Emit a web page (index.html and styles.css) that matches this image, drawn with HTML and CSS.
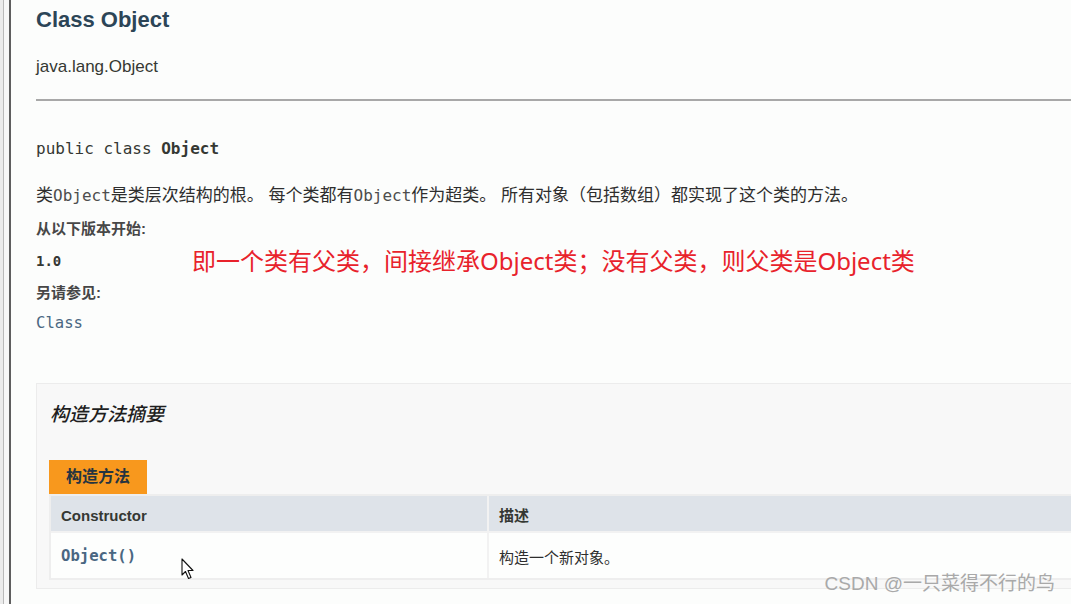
FILE: index.html
```html
<!DOCTYPE html>
<html lang="zh-CN">
<head>
    <meta charset="UTF-8">
    <meta name="viewport" content="width=device-width, initial-scale=1.0">
    <title>Object (Java Platform SE)</title>
    <link rel="stylesheet" href="styles.css">
</head>
<body>
    <div class="frame">
        <div class="gutter"></div>
        <main class="page">
            <!-- Class header -->
            <h1 class="title">Class Object</h1>
            <div class="pkg">java.lang.Object</div>
            <hr class="rule">

            <!-- Class description -->
            <pre class="signature">public class <b>Object</b></pre>
            <p class="desc">类<code>Object</code>是类层次结构的根。 每个类都有<code>Object</code>作为超类。 所有对象（包括数组）都实现了这个类的方法。</p>
            <dl class="notes">
                <dt>从以下版本开始:</dt>
                <dd class="since">
                    <span class="since-value">1.0</span>
                    <span class="remark">即一个类有父类，间接继承Object类；没有父类，则父类是Object类</span>
                </dd>
                <dt>另请参见:</dt>
                <dd><a class="ref">Class</a></dd>
            </dl>

            <!-- Constructor summary -->
            <section class="summary">
                <h3 class="summary-title">构造方法摘要</h3>
                <div class="tab">构造方法</div>
                <div class="table">
                    <div class="th">Constructor</div>
                    <div class="th">描述</div>
                    <div class="td"><code class="member">Object()</code></div>
                    <div class="td">构造一个新对象。</div>
                </div>
            </section>
        </main>
    </div>

    <svg class="cursor" width="14" height="22" viewBox="0 0 14 22">
        <path d="M1 1 L1 17 L4.5 13.5 L7.5 20.5 L10 19.5 L7 12.5 L12 12.5 Z" fill="#fff" stroke="#111" stroke-width="1.1" stroke-linejoin="round"/>
    </svg>
    <div class="watermark">CSDN @一只菜得不行的鸟</div>
</body>
</html>
```

FILE: styles.css
```css
/* General Styles */
body {
    margin: 0;
    padding: 0;
    background: #fcfdfc;
    color: #353535;
    font-family: 'Liberation Sans', Arial, 'Noto Sans CJK SC', sans-serif;
    overflow: hidden;
}

code, pre {
    font-family: 'DejaVu Sans Mono', 'Liberation Mono', monospace;
}

.frame {
    display: flex;
    min-height: 100vh;
}

.gutter {
    width: 9px;
    flex-shrink: 0;
    background: linear-gradient(to right, #ebebeb 0 3px, #b9b9b9 3px 4px, #f7f7f7 4px 9px);
    border-right: 2px solid #5e5e5e;
}

.page {
    flex: 1;
    min-width: 0;
    padding-left: 25px;
}

/* Header */
.title {
    margin: 7px 0 0;
    font-size: 22px;
    line-height: 26px;
    font-weight: bold;
    color: #2c4557;
}

.pkg {
    margin-top: 24px;
    font-size: 17px;
    line-height: 20px;
    color: #353833;
}

.rule {
    margin: 22px 0 0;
    height: 0;
    border: none;
    border-top: 2px solid #a8a8a8;
}

/* Description */
.signature {
    margin: 38px 0 0;
    font-size: 16px;
    line-height: 20px;
    color: #353833;
}

.desc {
    margin: 25px 0 0;
    font-size: 17px;
    line-height: 24px;
    color: #2e2e2e;
}

.desc code {
    font-size: 16px;
    color: #4d4d4d;
}

.notes {
    margin: 11px 0 0;
}

.notes dt {
    font-size: 15px;
    line-height: 20px;
    font-weight: bold;
    color: #474747;
}

.notes dd {
    margin: 12px 0 12px;
    height: 20px;
    display: flex;
    align-items: center;
}

.notes dd:last-child {
    margin-top: 10px;
}

.since-value {
    font-family: 'DejaVu Sans Mono', monospace;
    font-size: 14px;
    font-weight: bold;
    color: #353833;
    width: 156px;
}

.remark {
    font-family: 'Noto Sans', 'Noto Sans CJK SC', sans-serif;
    font-size: 24px;
    line-height: 20px;
    color: #e8222b;
    white-space: nowrap;
}

.ref {
    font-family: 'DejaVu Sans Mono', monospace;
    font-size: 15.6px;
    color: #4a6782;
}

/* Summary */
.summary {
    margin: 50px -12px 0 0;
    padding: 19px 0 8px 12px;
    background: #f8f8f8;
    border: 1px solid #ececec;
}

.summary-title {
    margin: 0 0 0 1px;
    font-size: 19px;
    line-height: 24px;
    font-style: italic;
    font-weight: 500;
    color: #1e1e1e;
}

.tab {
    display: inline-block;
    margin-top: 33px;
    height: 34px;
    padding: 0 17px;
    line-height: 34px;
    font-size: 16px;
    font-weight: bold;
    color: #253441;
    background: #f8981d;
    vertical-align: top;
}

.table {
    display: grid;
    grid-template-columns: 436px 1fr;
    gap: 2px;
    background: #f2f2f2;
    border: 2px solid #eeeeee;
}

.th {
    padding: 10px 10px 5px;
    line-height: 20px;
    font-size: 15px;
    font-weight: bold;
    color: #353833;
    background: #dee3e9;
}

.td {
    display: flex;
    align-items: center;
    min-height: 44px;
    padding: 1px 10px 0;
    font-size: 15px;
    color: #2e2e2e;
    background: #fdfefd;
}

.member {
    font-size: 15.6px;
    font-weight: bold;
    color: #4a6782;
}

/* Overlays */
.cursor {
    position: absolute;
    left: 181px;
    top: 558px;
}

.watermark {
    position: absolute;
    right: 16px;
    top: 572px;
    font-size: 19px;
    line-height: 24px;
    color: #a9a9a9;
    white-space: nowrap;
}
```
